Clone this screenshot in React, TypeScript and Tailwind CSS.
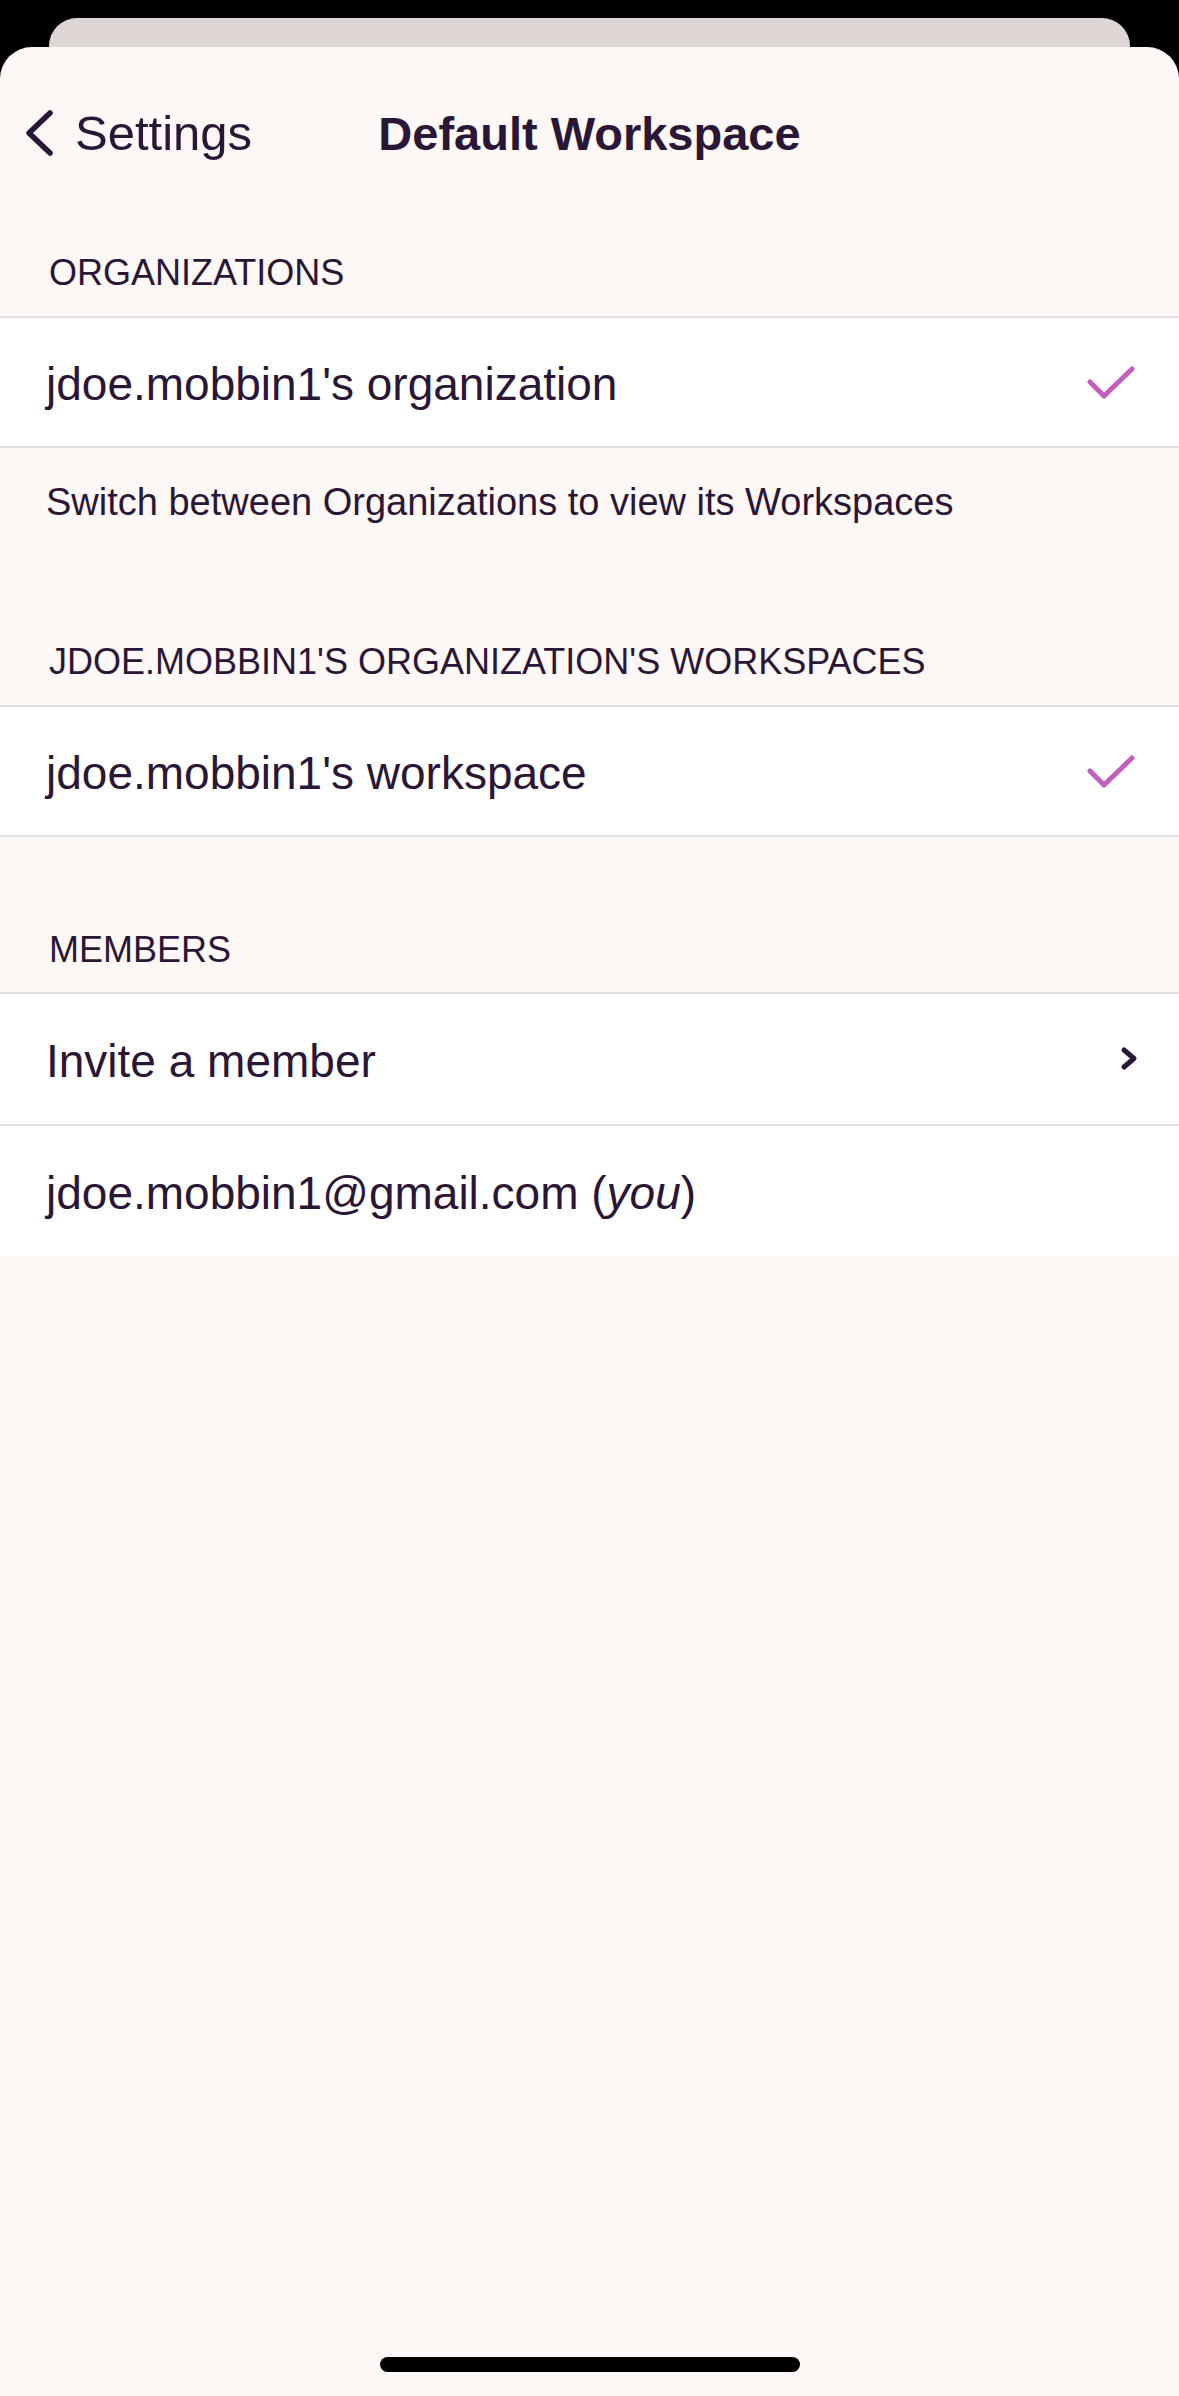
import React from "react";

const ink = "text-[#2a1637]";

function Check() {
  return (
    <svg width="48" height="36" viewBox="0 0 48 36" fill="none">
      <path d="M3 18 L17 32 L45 5" stroke="#c15ec0" strokeWidth={5} strokeLinecap="round" strokeLinejoin="round" />
    </svg>
  );
}

function SectionHeader({ children, pt, pb }: { children: React.ReactNode; pt: string; pb: string }) {
  return (
    <div className={`px-[49px] ${pt} ${pb} text-[36px] leading-[44px] uppercase ${ink}`}>{children}</div>
  );
}

export default function App() {
  return (
    <div
      className="w-[1179px] h-[2396px] bg-black flex flex-col overflow-hidden"
      style={{ fontFamily: '"Liberation Sans", Arial, sans-serif' }}
    >
      {/* stacked sheet behind */}
      <div className="mx-[49px] mt-[18px] h-[29px] rounded-t-[28px] bg-[#ded6d4]" />

      <div className="flex-1 flex flex-col bg-[#fdf8f6] rounded-t-[32px]">
        {/* nav bar */}
        <div className="h-[172px] grid grid-cols-[1fr_auto_1fr] items-center">
          <div className="flex items-center pl-[24px]">
            <svg width="34" height="52" viewBox="0 0 34 52" fill="none">
              <path d="M26 6 L5 26 L26 46" stroke="#2a1637" strokeWidth={5.5} strokeLinecap="round" strokeLinejoin="round" />
            </svg>
            <span className={`ml-[17px] text-[49px] leading-none ${ink}`}>Settings</span>
          </div>
          <div className={`text-[47px] font-bold leading-none ${ink}`}>Default Workspace</div>
          <div />
        </div>

        <SectionHeader pt="pt-[32px]" pb="pb-[21px]">Organizations</SectionHeader>
        <div className="h-[132px] bg-white border-y-2 border-[#e2dedf] flex items-center justify-between pl-[46px] pr-[44px]">
          <span className={`pt-[4px] text-[46px] ${ink}`}>jdoe.mobbin1's organization</span>
          <Check />
        </div>
        <div className={`px-[46px] pt-[31px] pb-[84px] text-[38px] leading-[46px] ${ink}`}>
          Switch between Organizations to view its Workspaces
        </div>

        <SectionHeader pt="pt-[31px]" pb="pb-[21px]">jdoe.mobbin1's organization's workspaces</SectionHeader>
        <div className="h-[132px] bg-white border-y-2 border-[#e2dedf] flex items-center justify-between pl-[46px] pr-[44px]">
          <span className={`pt-[4px] text-[46px] ${ink}`}>jdoe.mobbin1's workspace</span>
          <Check />
        </div>

        <SectionHeader pt="pt-[91px]" pb="pb-[20px]">Members</SectionHeader>
        <div className="bg-white border-t-2 border-[#e2dedf]">
          <div className="h-[132px] border-b-2 border-[#e2dedf] flex items-center justify-between pl-[46px] pr-[40px]">
            <span className={`pt-[4px] text-[46px] ${ink}`}>Invite a member</span>
            <svg width="20" height="28" viewBox="0 0 20 28" fill="none">
              <path d="M5 5 L15 13.5 L5 22" stroke="#2a1637" strokeWidth={5} strokeLinecap="round" strokeLinejoin="round" />
            </svg>
          </div>
          <div className="h-[131px] flex items-center pl-[46px]">
            <span className={`pt-[4px] text-[46px] ${ink}`}>
              jdoe.mobbin1@gmail.com (<i>you</i>)
            </span>
          </div>
        </div>

        <div className="flex-1" />
        <div className="mx-auto mb-[24px] w-[420px] h-[15px] rounded-full bg-black" />
      </div>
    </div>
  );
}
